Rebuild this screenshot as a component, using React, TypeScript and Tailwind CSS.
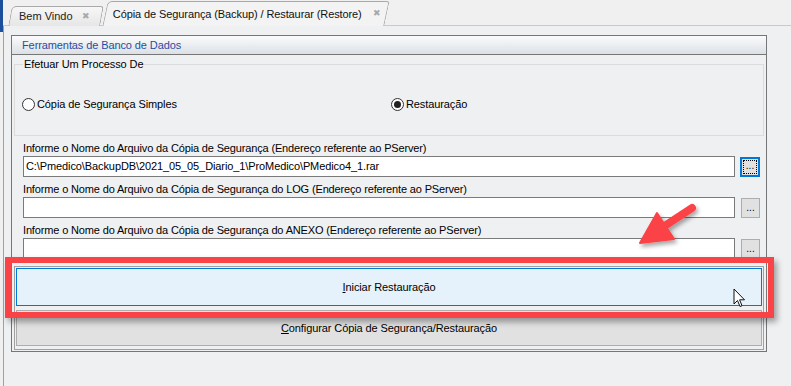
import React from "react";

const font = { fontFamily: '"Liberation Sans", Arial, sans-serif' };

const Radio = ({ checked, label }: { checked?: boolean; label: string }) => (
  <label className="flex items-center gap-[2px] text-[11px] tracking-[-0.1px] text-black">
    <span className="w-[13px] h-[13px] rounded-full border border-[#333] bg-white flex items-center justify-center">
      {checked && <span className="w-[7px] h-[7px] rounded-full bg-[#222]" />}
    </span>
    <span>{label}</span>
  </label>
);

const FileRow = ({ label, value, focused }: { label: string; value?: string; focused?: boolean }) => (
  <div className="flex flex-col">
    <div className="h-[20px] pt-[6px] text-[11px] leading-[13px] tracking-[-0.15px] text-black whitespace-nowrap">{label}</div>
    <div className="flex items-center">
      <div className="w-[712px] h-[21px] border border-[#7a7a7a] bg-white text-[11px] leading-[19px] tracking-[-0.1px] px-[2px] text-black">
        {value}
      </div>
      {focused ? (
        <div className="ml-[5px] w-[20px] h-[20px] border-2 border-[#0078d7] bg-[#e1e1e1] flex items-center justify-center">
          <div className="w-[14px] h-[14px] border border-dotted border-black text-[10px] leading-[9px] text-center">...</div>
        </div>
      ) : (
        <div className="ml-[6px] w-[19px] h-[20px] border border-[#adadad] bg-[#e1e1e1] text-[10px] leading-[18px] text-center">...</div>
      )}
    </div>
  </div>
);

export default function App() {
  return (
    <div className="relative w-[791px] h-[386px] overflow-hidden bg-[#f0f0f0]" style={font}>
      {/* tab strip */}
      <div className="relative h-[26px] border-b border-[#c9c9c9] flex items-end pl-[8px]">
        <div className="absolute left-0 top-0 w-[3px] h-[32px] bg-[#1b4f9c]" />
        <div className="relative h-[20px] w-[92px] mb-[-1px] mr-[3px] border border-b-0 border-[#a9a9a9] rounded-tl-[5px] rounded-tr-[3px] bg-gradient-to-b from-[#f7f7f7] to-[#e6e6e6] flex items-center pl-[8px] text-[11px] text-[#222] whitespace-nowrap [transform:skewX(-10deg)_translateX(2px)]">
          <span className="[transform:skewX(10deg)]">Bem Vindo</span>
          <span className="ml-[9px] text-[9px] text-[#a8a8a8] [transform:skewX(10deg)]">✖</span>
        </div>
        <div className="relative h-[25px] w-[282px] mb-[-1px] border border-b-0 border-[#a9a9a9] rounded-tl-[5px] rounded-tr-[3px] bg-[#f3f3f4] flex items-center pl-[7px] text-[11px] tracking-[-0.1px] text-[#111] whitespace-nowrap [transform:skewX(-12deg)_translateX(2px)]">
          <span className="[transform:skewX(12deg)]">Cópia de Segurança (Backup) / Restaurar (Restore)</span>
          <span className="ml-[11px] text-[9px] text-[#a8a8a8] [transform:skewX(12deg)]">✖</span>
        </div>
      </div>

      {/* content */}
      <div className="ml-[3px] h-[360px] border-l border-[#a0a0a0] bg-[#eff0f2] pt-[9px] pl-[7px]">
        <div className="w-[756px] h-[317px] border border-[#767676] flex flex-col">
          <div className="h-[19px] border-b border-[#767676] bg-gradient-to-b from-[#fbfbfc] to-[#dce0e5] text-[11px] leading-[18px] tracking-[-0.1px] text-[#1f4ea6] pl-[10px]">
            Ferramentas de Banco de Dados
          </div>
          <div className="flex flex-col px-[2px]">
            <div className="relative mt-[9px] h-[72px] border border-[#dcdcdc]">
              <div className="absolute left-[8px] top-[-8px] bg-[#eff0f2] px-[1px] text-[11px] leading-[14px] tracking-[-0.1px] text-black">
                Efetuar Um Processo De
              </div>
              <div className="flex items-center pl-[7px] pt-[31px]">
                <div className="w-[369px]">
                  <Radio label="Cópia de Segurança Simples" />
                </div>
                <Radio checked label="Restauração" />
              </div>
            </div>
            <div className="pl-[9px] flex flex-col">
              <FileRow
                focused
                label="Informe o Nome do Arquivo da Cópia de Segurança (Endereço referente ao PServer)"
                value="C:\Pmedico\BackupDB\2021_05_05_Diario_1\ProMedico\PMedico4_1.rar"
              />
              <FileRow label="Informe o Nome do Arquivo da Cópia de Segurança do LOG (Endereço referente ao PServer)" />
              <FileRow label="Informe o Nome do Arquivo da Cópia de Segurança do ANEXO (Endereço referente ao PServer)" />
            </div>
            <div className="mt-[7px] h-[84px] border border-[#a0a0a0] p-[1px] flex flex-col gap-[4px]">
              <button className="h-[38px] border border-[#0078d7] bg-[#e5f1fb] text-[11px] tracking-[-0.1px] text-black">
                <span className="underline">I</span>niciar Restauração
              </button>
              <button className="h-[36px] border border-[#adadad] bg-[#e1e1e1] text-[11px] tracking-[-0.1px] text-black">
                <span className="underline">C</span>onfigurar Cópia de Segurança/Restauração
              </button>
            </div>
          </div>
        </div>
      </div>

      {/* annotation: red highlight box */}
      <div className="absolute left-[5px] top-[257px] w-[769px] h-[61px] border-[6px] border-[#fa4346] shadow-[3px_4px_6px_rgba(0,0,0,0.35)]" />

      {/* annotation: red arrow */}
      <svg className="absolute left-0 top-0" width="791" height="386" viewBox="0 0 791 386">
        <defs>
          <filter id="sh" x="-20%" y="-20%" width="140%" height="140%">
            <feDropShadow dx="2" dy="3" stdDeviation="2" floodColor="#000" floodOpacity="0.35" />
          </filter>
        </defs>
        <g filter="url(#sh)" fill="#fa4346" stroke="#fa4346">
          <line x1="692" y1="208" x2="660" y2="229" strokeWidth="8" strokeLinecap="round" />
          <polygon points="640,243 657,213 674,239" strokeWidth="2" strokeLinejoin="round" />
        </g>
      </svg>

      {/* mouse cursor */}
      <svg className="absolute left-[733px] top-[288px]" width="14" height="22" viewBox="0 0 14 22">
        <path d="M1 1 L1 16 L4.5 12.5 L7 18.5 L9 17.7 L6.6 11.8 L11.5 11.8 Z" fill="#fff" stroke="#111" strokeWidth="1" strokeLinejoin="round" />
      </svg>
    </div>
  );
}
